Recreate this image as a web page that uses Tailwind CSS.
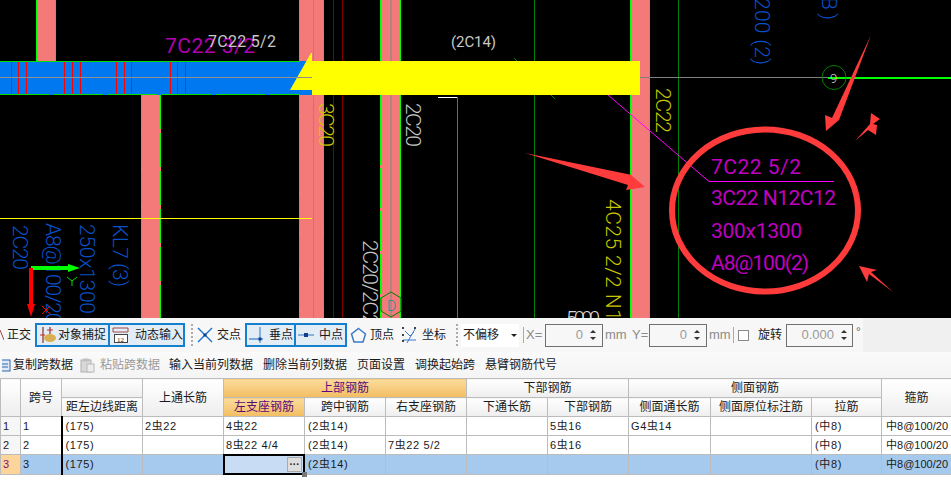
<!DOCTYPE html>
<html>
<head>
<meta charset="utf-8">
<title>梁平法表格</title>
<script src="https://cdn.jsdelivr.net/npm/@tailwindcss/browser@4"></script>
</head>
<body class="bg-white">
<div class="w-[951px] h-[495px] overflow-hidden flex flex-col bg-white font-['Liberation_Sans','Noto_Sans_CJK_SC',sans-serif] text-[12px] text-[#1a1a1a]">

  <!-- cad view -->
  <svg class="block flex-none" width="951" height="318" viewBox="0 0 951 318" font-family="Roboto, sans-serif" font-weight="300">
    <rect width="951" height="318" fill="#000"/>
    <line x1="333.5" y1="0" x2="333.5" y2="318" stroke="#800000"/>
    <line x1="342.5" y1="0" x2="342.5" y2="318" stroke="#800000"/>
    <line x1="534.5" y1="0" x2="534.5" y2="318" stroke="#008000"/>
    <line x1="678.5" y1="0" x2="678.5" y2="318" stroke="#008000"/>
    <line x1="514" y1="58" x2="555" y2="99" stroke="#008000"/>
    <line x1="457.5" y1="97" x2="457.5" y2="318" stroke="#ff00ff"/>
    <line x1="438" y1="97.5" x2="457" y2="97.5" stroke="#fff"/>

    <!-- columns -->
    <rect x="36" y="0" width="20" height="61" fill="#f47a7a"/>
    <rect x="141" y="95" width="20" height="223" fill="#f47a7a"/>
    <rect x="299" y="0" width="25" height="318" fill="#f47a7a"/>
    <rect x="380" y="0" width="21" height="318" fill="#f47a7a"/>
    <rect x="630" y="0" width="20" height="318" fill="#f47a7a"/>
    <g stroke="#00ff00" stroke-width="1">
      <line x1="36.5" y1="0" x2="36.5" y2="61"/><line x1="55.5" y1="0" x2="55.5" y2="61"/>
      <line x1="141.5" y1="95" x2="141.5" y2="318" stroke-dasharray="34 4"/><line x1="160.5" y1="95" x2="160.5" y2="318" stroke-dasharray="34 4"/>
      <line x1="299.5" y1="0" x2="299.5" y2="318" stroke-dasharray="36 3"/><line x1="323.5" y1="0" x2="323.5" y2="318" stroke-dasharray="36 3"/>
      <line x1="380.5" y1="0" x2="380.5" y2="125"/><line x1="380.5" y1="125" x2="380.5" y2="318" stroke-dasharray="40 3"/><line x1="400.5" y1="0" x2="400.5" y2="318"/>
      <line x1="630.5" y1="0" x2="630.5" y2="318"/><line x1="649.5" y1="0" x2="649.5" y2="318"/>
    </g>
    <line x1="313.5" y1="0" x2="313.5" y2="318" stroke="#8a8a9a"/>
    <line x1="391" y1="0" x2="391" y2="318" stroke="#6f8f8f"/>

    <!-- beam -->
    <rect x="0" y="61" width="312" height="34" fill="#0078f0"/>
    <g stroke="#ff0000" stroke-width="1">
      <line x1="11.5" y1="62" x2="11.5" y2="94"/><line x1="18.5" y1="62" x2="18.5" y2="94"/><line x1="26.5" y1="62" x2="26.5" y2="94"/>
      <line x1="64.5" y1="62" x2="64.5" y2="94"/><line x1="72.5" y1="62" x2="72.5" y2="94"/><line x1="80.5" y1="62" x2="80.5" y2="94"/>
      <line x1="116.5" y1="62" x2="116.5" y2="94"/><line x1="124.5" y1="62" x2="124.5" y2="94"/><line x1="131.5" y1="62" x2="131.5" y2="94"/>
      <line x1="170.5" y1="62" x2="170.5" y2="94"/><line x1="177.5" y1="62" x2="177.5" y2="94"/><line x1="185.5" y1="62" x2="185.5" y2="94"/>
    </g>
    <line x1="0" y1="61.5" x2="300" y2="61.5" stroke="#00e000"/>
    <line x1="0" y1="94.5" x2="300" y2="94.5" stroke="#00e000" stroke-dasharray="49 5"/>
    <rect x="312" y="61" width="328" height="34" fill="#ffff00"/>
    <polygon points="290,90 311,53 312,53 312,90" fill="#ffff00"/>
    <line x1="0" y1="77.5" x2="312" y2="77.5" stroke="#909090"/>
    <line x1="640" y1="77.5" x2="830" y2="77.5" stroke="#808080"/>
    <line x1="828" y1="78" x2="951" y2="78" stroke="#00ff00" stroke-width="2"/>
    <line x1="0" y1="218.5" x2="312" y2="218.5" stroke="#ffff00"/>
    <polyline points="608,95 709,181.5 834,181.5" fill="none" stroke="#ff00ff"/>

    <!-- axis markers -->
    <circle cx="834" cy="77.5" r="12" fill="none" stroke="#008000"/>
    <polygon points="391,292 401,298 401,311 391,317 381,311 381,298" fill="none" stroke="#008000"/>
    <text x="387" y="311" font-size="14" fill="#2a8c9c">D</text>
    <text x="830" y="83" font-size="13" fill="#ddd">9</text>

    <!-- plain labels -->
    <text x="165" y="53" font-size="21" font-weight="400" fill="#b000b0" textLength="90" lengthAdjust="spacing">7C22 3/2</text>
    <text x="208" y="47" font-size="16" font-weight="400" fill="#c8c8c8" textLength="68" lengthAdjust="spacing">7C22 5/2</text>
    <text x="451" y="47" font-size="15" font-weight="400" fill="#c8c8c8" textLength="45" lengthAdjust="spacing">(2C14)</text>
    <text x="566" y="326" font-size="20" fill="#d8d8d8" textLength="34" lengthAdjust="spacing">5000</text>

    <!-- rotated labels -->
    <g font-size="21" fill="#0a50c8">
      <text x="13" y="225" transform="rotate(90 13 225)" textLength="45" lengthAdjust="spacing">2C20</text>
      <text x="46" y="223" transform="rotate(90 46 223)" textLength="112" lengthAdjust="spacing">A8@100/200</text>
      <text x="80" y="224" transform="rotate(90 80 224)" textLength="90" lengthAdjust="spacing">250x1300</text>
      <text x="113" y="224" transform="rotate(90 113 224)" textLength="63" lengthAdjust="spacing">KL7 (3)</text>
      <text x="755" y="-2" transform="rotate(90 755 -2)" textLength="67" lengthAdjust="spacing">200 (2)</text>
      <text x="822" y="-3" transform="rotate(90 822 -3)" textLength="23" lengthAdjust="spacing">B)</text>
    </g>
    <g font-size="21" fill="#c8c800">
      <text x="319" y="103" transform="rotate(90 319 103)" textLength="44" lengthAdjust="spacing">3C20</text>
      <text x="606" y="199" transform="rotate(90 606 199)" textLength="134" lengthAdjust="spacing">4C25 2/2 N12</text>
      <text x="656" y="88" transform="rotate(90 656 88)" textLength="45" lengthAdjust="spacing">2C22</text>
    </g>
    <g font-size="21" fill="#c8c8c8">
      <text x="406" y="103" transform="rotate(90 406 103)" textLength="44" lengthAdjust="spacing">2C20</text>
      <text x="363" y="240" transform="rotate(90 363 240)" textLength="96" lengthAdjust="spacing">2C20/2C20</text>
    </g>

    <!-- ucs -->
    <line x1="31" y1="268" x2="70" y2="268" stroke="#00ff00" stroke-width="4"/>
    <polygon points="68,264 80,268 68,272" fill="#00ff00"/>
    <line x1="31" y1="268" x2="31" y2="306" stroke="#ff0000" stroke-width="4"/>
    <polygon points="27,304 35,304 31,317" fill="#ff0000"/>
    <path d="M67 277 L72 281 L77 277 M72 281 V286" fill="none" stroke="#00e000"/>
    <path d="M42 306 L50 314 M50 306 L42 314" fill="none" stroke="#ff0000"/>

    <!-- callout -->
    <g font-size="21" font-weight="400" fill="#c000c0">
      <text x="711" y="174" textLength="90" lengthAdjust="spacing">7C22 5/2</text>
      <text x="711" y="205" textLength="125" lengthAdjust="spacing">3C22 N12C12</text>
      <text x="711" y="238" textLength="91" lengthAdjust="spacing">300x1300</text>
      <text x="711" y="270" textLength="98" lengthAdjust="spacing">A8@100(2)</text>
    </g>
    <ellipse cx="765" cy="210.5" rx="93" ry="81" fill="none" stroke="#ff3b3b" stroke-width="6"/>
    <polygon points="525,153 632,175 631,175 645,187 626,190 628,185" fill="#ff3b3b"/>
    <polygon points="871,35 839,120 826,131 825,115 832,118" fill="#ff3b3b"/>
    <polygon points="855,141 870,124 871,113 880,119 873,124 877,125 876,135 868,130" fill="#ff3b3b"/>
    <polygon points="893,292 869,274 867,282 859,266 877,270 871,272" fill="#ff3b3b"/>
  </svg>

  <!-- snap toolbar -->
  <div class="flex-none h-[34px] bg-[#f0f0f0] flex">
    <div class="w-[863px] bg-[#f7f7f7] flex items-center whitespace-nowrap overflow-hidden">
      <svg class="w-[4px] h-[12px] flex-none" viewBox="0 0 4 12"><path d="M0 1 L4 11" stroke="#a04848" fill="none"/></svg>
      <span class="ml-[3px] w-[28px]">正交</span>
      <div class="h-[24px] w-[75px] border-2 border-[#1580d0] bg-[#e3edf6] flex items-center">
        <svg class="w-[18px] h-[18px] ml-[2px] flex-none" viewBox="0 0 18 18">
          <path d="M4 1 V17 M11 1 V8" stroke="#8a3030" stroke-width="1.2" fill="none"/>
          <path d="M1 9 H6 M8 4 H14" stroke="#c03030" stroke-width="1.2"/>
          <ellipse cx="11" cy="12" rx="6" ry="4" fill="#d8b050"/>
        </svg>
        <span class="ml-[1px]">对象捕捉</span>
      </div>
      <div class="h-[24px] w-[75px] border-2 border-l-0 border-[#1580d0] bg-[#e3edf6] flex items-center">
        <svg class="w-[18px] h-[18px] ml-[2px] flex-none" viewBox="0 0 18 18">
          <path d="M1 2 H16 M1 6 H16 M1 2 V6 M16 2 V6" stroke="#a04848" fill="none"/>
          <rect x="2.5" y="8.5" width="13" height="8" fill="#fff" stroke="#444"/>
          <text x="5" y="15.5" font-size="7" font-family="Liberation Serif, serif" fill="#222">12</text>
        </svg>
        <span class="ml-[5px]">动态输入</span>
      </div>
      <div class="ml-[6px] w-[3px] h-[22px] border-l-2 border-dotted border-[#aaa]"></div>
      <svg class="ml-[3px] w-[16px] h-[16px] flex-none" viewBox="0 0 16 16"><path d="M1 1 L15 15 M15 1 L1 15" stroke="#1a70c8" stroke-width="1.4"/><rect x="6.5" y="6.5" width="3" height="3" fill="#10408c"/></svg>
      <span class="ml-[4px] w-[28px]">交点</span>
      <div class="h-[24px] w-[51px] border-2 border-[#1580d0] bg-[#e3edf6] flex items-center">
        <svg class="w-[18px] h-[18px] ml-[1px] flex-none" viewBox="0 0 18 18"><path d="M1 13 H15 M12 1 V17" stroke="#5a90d0" stroke-width="1.3"/><rect x="10.5" y="11.5" width="3" height="3" fill="#10408c"/></svg>
        <span class="ml-[3px]">垂点</span>
      </div>
      <div class="h-[24px] w-[51px] border-2 border-l-0 border-[#1580d0] bg-[#e3edf6] flex items-center">
        <svg class="w-[18px] h-[18px] ml-[1px] flex-none" viewBox="0 0 18 18"><path d="M1 9 H17" stroke="#5a90d0" stroke-width="1.3"/><rect x="7" y="7" width="4" height="4" fill="#10408c"/></svg>
        <span class="ml-[4px]">中点</span>
      </div>
      <svg class="ml-[3px] w-[17px] h-[17px] flex-none" viewBox="0 0 17 17"><polygon points="8.5,1.5 15.5,7 13,15 4,15 1.5,7" fill="none" stroke="#3a7cc8" stroke-width="1.5"/></svg>
      <span class="ml-[3px] w-[30px]">顶点</span>
      <svg class="ml-[1px] w-[18px] h-[18px] flex-none" viewBox="0 0 18 18"><path d="M2 14 H15 M6 17 L14 3 M4 5 L9 10 L13 6" stroke="#3a7cc8" fill="none"/><g fill="#444"><rect x="1" y="1" width="2" height="2"/><rect x="13" y="1" width="2" height="2"/><rect x="1" y="8" width="2" height="2"/><rect x="1" y="14" width="2" height="2"/></g></svg>
      <span class="ml-[3px] w-[25px]">坐标</span>
      <div class="ml-[9px] w-[3px] h-[22px] border-l-2 border-dotted border-[#aaa]"></div>
      <div class="ml-[2px] h-[23px] w-[58px] bg-white flex items-center">
        <span class="ml-[2px] w-[46px]">不偏移</span>
        <div class="ml-[2px] w-0 h-0 border-x-[3px] border-x-transparent border-t-[3px] border-t-[#222]"></div>
      </div>
      <div class="ml-[4px] w-px h-[16px] bg-[#aaa]"></div>
      <span class="ml-[2px] w-[19px] text-[#8a8a8a] text-[13px]">X=</span>
      <div class="h-[23px] w-[58px] border border-[#707070] flex items-center justify-end text-[#9a9a9a] text-[13px]">
        <span class="mr-[4px]">0</span>
        <span class="w-[12px] mr-[3px] flex flex-col items-center gap-[4px]">
          <span class="w-0 h-0 border-x-[3px] border-x-transparent border-b-[3px] border-b-[#333]"></span>
          <span class="w-0 h-0 border-x-[3px] border-x-transparent border-t-[3px] border-t-[#333]"></span>
        </span>
      </div>
      <span class="ml-[2px] w-[26px] text-[#8a8a8a] text-[13px]">mm</span>
      <span class="ml-[1px] w-[17px] text-[#8a8a8a] text-[13px]">Y=</span>
      <div class="h-[23px] w-[58px] border border-[#707070] flex items-center justify-end text-[#9a9a9a] text-[13px]">
        <span class="mr-[4px]">0</span>
        <span class="w-[12px] mr-[3px] flex flex-col items-center gap-[4px]">
          <span class="w-0 h-0 border-x-[3px] border-x-transparent border-b-[3px] border-b-[#333]"></span>
          <span class="w-0 h-0 border-x-[3px] border-x-transparent border-t-[3px] border-t-[#333]"></span>
        </span>
      </div>
      <span class="ml-[2px] w-[24px] text-[#8a8a8a] text-[13px]">mm</span>
      <div class="w-px h-[16px] bg-[#aaa]"></div>
      <div class="ml-[4px] w-[11px] h-[11px] border border-[#8a8a8a] bg-white"></div>
      <span class="ml-[9px] w-[28px]">旋转</span>
      <div class="h-[23px] w-[67px] border border-[#707070] flex items-center justify-end text-[#9a9a9a] text-[13px]">
        <span class="mr-[4px]">0.000</span>
        <span class="w-[12px] mr-[2px] flex flex-col items-center gap-[4px]">
          <span class="w-0 h-0 border-x-[3px] border-x-transparent border-b-[3px] border-b-[#333]"></span>
          <span class="w-0 h-0 border-x-[3px] border-x-transparent border-t-[3px] border-t-[#333]"></span>
        </span>
      </div>
      <span class="ml-[3px] text-[#666] -mt-[6px]">°</span>
    </div>
  </div>

  <!-- table toolbar -->
  <div class="flex-none h-[26px] bg-gradient-to-b from-[#fafafa] to-[#f4f4f4] flex items-center whitespace-nowrap">
    <svg class="w-[9px] h-[14px] flex-none ml-[2px]" viewBox="0 0 9 14"><rect x="-4" y="2" width="12" height="11" fill="#dfe9f6" stroke="#2a66b0"/><path d="M0 6 H6 M0 9 H6" stroke="#2a66b0"/></svg>
    <span class="ml-[2px] w-[60px]">复制跨数据</span>
    <svg class="ml-[7px] w-[15px] h-[15px] flex-none" viewBox="0 0 15 15"><rect x="1" y="2" width="10" height="12" fill="#d8d8d8" stroke="#b0b0b0"/><rect x="7" y="6" width="7" height="8" fill="#ececec" stroke="#b8b8b8"/><rect x="3" y="0.5" width="6" height="3" fill="#c0c0c0"/></svg>
    <span class="ml-[5px] w-[60px] text-[#9a9a9a]">粘贴跨数据</span>
    <span class="ml-[9px] w-[84px]">输入当前列数据</span>
    <span class="ml-[10px] w-[84px]">删除当前列数据</span>
    <span class="ml-[10px] w-[48px]">页面设置</span>
    <span class="ml-[10px] w-[60px]">调换起始跨</span>
    <span class="ml-[10px]">悬臂钢筋代号</span>
  </div>

  <!-- span table -->
  <table class="flex-none table-fixed border-collapse w-[951px] border-t border-[#bcbcbc]">
    <colgroup>
      <col class="w-[20px]"><col class="w-[41px]"><col class="w-[81px]"><col class="w-[81px]"><col class="w-[81px]"><col class="w-[81px]"><col class="w-[81px]"><col class="w-[81px]"><col class="w-[81px]"><col class="w-[82px]"><col class="w-[101px]"><col class="w-[70px]"><col class="w-[70px]">
    </colgroup>
    <thead class="text-center font-normal">
      <tr class="h-[19px]">
        <th rowspan="2" class="font-normal border border-[#bcbcbc] bg-gradient-to-b from-white to-[#eeeeee]"></th>
        <th rowspan="2" class="font-normal border border-[#bcbcbc] bg-gradient-to-b from-white to-[#eeeeee]">跨号</th>
        <th class="font-normal border border-[#bcbcbc] bg-gradient-to-b from-white to-[#eeeeee]"></th>
        <th rowspan="2" class="font-normal border border-[#bcbcbc] bg-gradient-to-b from-white to-[#eeeeee]">上通长筋</th>
        <th colspan="3" class="font-normal border border-[#bcbcbc] bg-gradient-to-b from-[#fbdc9c] to-[#f2bd60] text-[#5a0a78]">上部钢筋</th>
        <th colspan="2" class="font-normal border border-[#bcbcbc] bg-gradient-to-b from-white to-[#eeeeee]">下部钢筋</th>
        <th colspan="3" class="font-normal border border-[#bcbcbc] bg-gradient-to-b from-white to-[#eeeeee]">侧面钢筋</th>
        <th rowspan="2" class="font-normal border border-[#bcbcbc] bg-gradient-to-b from-white to-[#eeeeee]">箍筋</th>
      </tr>
      <tr class="h-[19px]">
        <th class="font-normal border border-[#bcbcbc] bg-gradient-to-b from-white to-[#eeeeee]">距左边线距离</th>
        <th class="font-normal border border-[#bcbcbc] bg-gradient-to-b from-[#fbdc9c] to-[#f2bd60] text-[#5a0a78]">左支座钢筋</th>
        <th class="font-normal border border-[#bcbcbc] bg-gradient-to-b from-white to-[#eeeeee]">跨中钢筋</th>
        <th class="font-normal border border-[#bcbcbc] bg-gradient-to-b from-white to-[#eeeeee]">右支座钢筋</th>
        <th class="font-normal border border-[#bcbcbc] bg-gradient-to-b from-white to-[#eeeeee]">下通长筋</th>
        <th class="font-normal border border-[#bcbcbc] bg-gradient-to-b from-white to-[#eeeeee]">下部钢筋</th>
        <th class="font-normal border border-[#bcbcbc] bg-gradient-to-b from-white to-[#eeeeee]">侧面通长筋</th>
        <th class="font-normal border border-[#bcbcbc] bg-gradient-to-b from-white to-[#eeeeee]">侧面原位标注筋</th>
        <th class="font-normal border border-[#bcbcbc] bg-gradient-to-b from-white to-[#eeeeee]">拉筋</th>
      </tr>
    </thead>
    <tbody class="text-[11px] tracking-[0.6px]">
      <tr class="h-[19px]">
        <td class="border border-[#bcbcbc] pl-[2px] bg-[#f6f6f6]">1</td>
        <td class="border border-[#bcbcbc] pl-[2px] border-r-2 border-r-black">1</td>
        <td class="border border-[#bcbcbc] pl-[3px]">(175)</td>
        <td class="border border-[#bcbcbc] pl-[2px]">2虫22</td>
        <td class="border border-[#bcbcbc] pl-[2px]">4虫22</td>
        <td class="border border-[#bcbcbc] pl-[3px]">(2虫14)</td>
        <td class="border border-[#bcbcbc]"></td>
        <td class="border border-[#bcbcbc]"></td>
        <td class="border border-[#bcbcbc] pl-[2px]">5虫16</td>
        <td class="border border-[#bcbcbc] pl-[2px]">G4虫14</td>
        <td class="border border-[#bcbcbc]"></td>
        <td class="border border-[#bcbcbc] pl-[3px]">(中8)</td>
        <td class="border border-[#bcbcbc] pl-[4px] tracking-normal whitespace-nowrap overflow-hidden">中8@100/20</td>
      </tr>
      <tr class="h-[19px]">
        <td class="border border-[#bcbcbc] pl-[2px] bg-[#f6f6f6]">2</td>
        <td class="border border-[#bcbcbc] pl-[2px] border-r-2 border-r-black">2</td>
        <td class="border border-[#bcbcbc] pl-[3px]">(175)</td>
        <td class="border border-[#bcbcbc]"></td>
        <td class="border border-[#bcbcbc] pl-[2px] whitespace-nowrap">8虫22 4/4</td>
        <td class="border border-[#bcbcbc] pl-[3px]">(2虫14)</td>
        <td class="border border-[#bcbcbc] pl-[2px] whitespace-nowrap">7虫22 5/2</td>
        <td class="border border-[#bcbcbc]"></td>
        <td class="border border-[#bcbcbc] pl-[2px]">6虫16</td>
        <td class="border border-[#bcbcbc]"></td>
        <td class="border border-[#bcbcbc]"></td>
        <td class="border border-[#bcbcbc] pl-[3px]">(中8)</td>
        <td class="border border-[#bcbcbc] pl-[4px] tracking-normal whitespace-nowrap overflow-hidden">中8@100/20</td>
      </tr>
      <tr class="h-[20px] bg-[#a6c9ee]">
        <td class="border border-[#bcbcbc] pl-[2px] bg-[#fdd59a] text-[#8a0a78]">3</td>
        <td class="border border-[#bcbcbc] pl-[2px] border-r-2 border-r-black">3</td>
        <td class="border border-[#bcbcbc] pl-[3px]">(175)</td>
        <td class="border border-[#bcbcbc]"></td>
        <td class="relative border border-[#bcbcbc]">
          <div class="absolute -inset-px border-2 border-black bg-[#c8dcf3] flex items-center justify-end">
            <div class="mr-px w-[15px] h-[15px] bg-[#dedede] border border-[#aaa] flex items-center justify-center font-bold text-[10px] leading-none tracking-normal">···</div>
          </div>
          <div class="absolute -right-[3px] -bottom-[3px] w-[5px] h-[5px] bg-[#777]"></div>
        </td>
        <td class="border border-[#bcbcbc] pl-[3px]">(2虫14)</td>
        <td class="border border-[#bcbcbc]"></td>
        <td class="border border-[#bcbcbc]"></td>
        <td class="border border-[#bcbcbc]"></td>
        <td class="border border-[#bcbcbc]"></td>
        <td class="border border-[#bcbcbc]"></td>
        <td class="border border-[#bcbcbc] pl-[3px]">(中8)</td>
        <td class="border border-[#bcbcbc] pl-[4px] tracking-normal whitespace-nowrap overflow-hidden">中8@100/20</td>
      </tr>
    </tbody>
  </table>
</div>
</body>
</html>
